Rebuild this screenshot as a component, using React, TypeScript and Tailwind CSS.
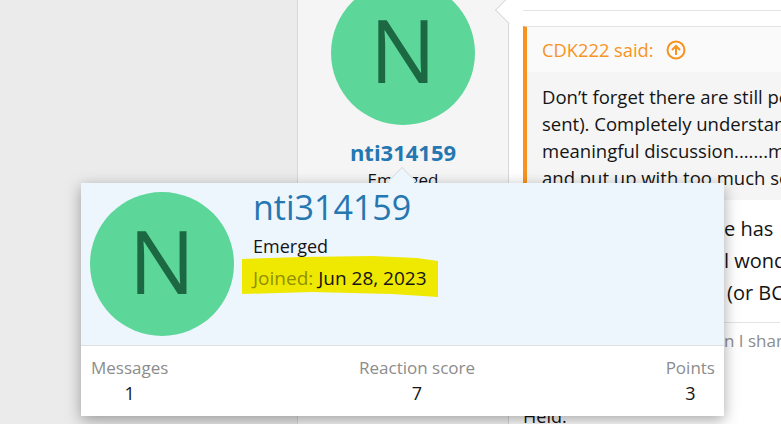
const font = { fontFamily: '"Open Sans", "Noto Sans", sans-serif' };

function Avatar() {
  return (
    <div className="w-[144px] h-[144px] shrink-0 rounded-full bg-[#5cd699] text-[#1c6842] flex items-center justify-center text-[88px] font-medium leading-none pb-[8px]">
      N
    </div>
  );
}

function Stat({ label, value }: { label: string; value: string }) {
  return (
    <div className="flex flex-col items-center">
      <span className="text-[17px] leading-[24px] text-[#8c8c8c]">{label}</span>
      <span className="text-[18px] leading-[27px] text-[#141414]">{value}</span>
    </div>
  );
}

function UpCircle() {
  return (
    <svg width="20" height="20" viewBox="0 0 20 20" fill="none" stroke="#f7931e" strokeWidth="2" className="ml-[12px]">
      <circle cx="10" cy="10" r="8.5" />
      <path d="M10 15V6M6 10l4-4 4 4" />
    </svg>
  );
}

export default function App() {
  return (
    <div className="relative w-[781px] h-[424px] overflow-hidden bg-[#ebebeb] flex" style={font}>
      {/* post: user cell */}
      <div className="ml-[297px] w-[212px] h-full shrink-0 border-x border-[#d8d8d8] bg-[#f5f5f5] flex flex-col items-center">
        <div className="mt-[-19px]">
          <Avatar />
        </div>
        <div className="mt-[13px] text-[22px] leading-[28px] font-bold text-[#2577b1]">nti314159</div>
        <div className="mt-[2px] text-[17px] leading-[24px] text-[#141414]">Emerged</div>
      </div>

      {/* post: main cell */}
      <div className="relative flex-1 min-w-0 bg-white pl-[14px] text-[18px] text-[#141414] whitespace-nowrap overflow-hidden">
        <div className="h-[11px] border-b border-[#e4e4e4]" />
        <div className="mt-[15px] border-t border-[#e4e4e4] border-l-4 border-l-[#f7931e] bg-[#f5f5f5]">
          <div className="h-[45px] bg-[#fafafa] pl-[15px] flex items-center text-[#f7931e] text-[18.3px]">
            CDK222 said:
            <UpCircle />
          </div>
          <div className="pl-[15px] pt-[11px] h-[128px] leading-[27px] text-[18.5px]">
            <div>Don’t forget there are still people</div>
            <div>sent). Completely understand the</div>
            <div>meaningful discussion.......maybe</div>
            <div>and put up with too much so</div>
          </div>
        </div>
        <div className="pt-[13px] pl-[201px] leading-[32px] text-[20px] h-[123px] border-b border-[#e4e4e4] mr-[1px]">
          <div>e has</div>
          <div>l wonder</div>
          <div className="ml-[3px]">(or BC</div>
        </div>
        <div className="pl-[201px] pt-[5px] text-[17px] leading-[26px] text-[#8c8c8c]">n I share</div>
        <div className="pt-[50px] text-[18px] leading-[24px]">Held.</div>
      </div>

      {/* little arrow between user cell and main cell */}
      <div className="absolute left-[499px] top-0 w-[20px] h-[20px] rotate-45 bg-white border-l border-b border-[#d8d8d8]" />

      {/* member tooltip */}
      <div className="absolute left-[81px] top-[183px] w-[643px] h-[233px] bg-white flex flex-col shadow-[0_4px_14px_rgba(0,0,0,0.35)]">
        <div className="absolute left-[311px] top-[-12px] w-[20px] h-[20px] rotate-45 bg-[#edf5fd] border-l border-t border-[#dfdfdf]" />
        <div className="relative h-[163px] shrink-0 bg-[#edf5fd] border-b border-[#dfdfdf] pl-[9px] pt-[9px] flex">
          <Avatar />
          <div className="ml-[19px] flex flex-col items-start">
            <div className="mt-[-10px] text-[34px] leading-[50px] text-[#2577b1]">nti314159</div>
            <div className="mt-[1px] text-[18px] leading-[26px] text-[#141414]">Emerged</div>
            <div className="relative mt-[6px] text-[19px] leading-[26px] text-[#141414]">
              <svg width="197" height="42" viewBox="0 0 197 42" className="absolute left-[-11px] top-[-9px]">
                <path d="M0 3 L60 1 L130 0 L175 2 L196 5 L196 41 L150 38 L70 36 L0 38 Z" fill="#efe800" />
              </svg>
              <span className="relative">
                <span className="text-[#8f9000]">Joined:</span> Jun 28, 2023
              </span>
            </div>
          </div>
        </div>
        <div className="flex justify-between pl-[10px] pr-[9px] pt-[10px]">
          <Stat label="Messages" value="1" />
          <Stat label="Reaction score" value="7" />
          <Stat label="Points" value="3" />
        </div>
      </div>
    </div>
  );
}
